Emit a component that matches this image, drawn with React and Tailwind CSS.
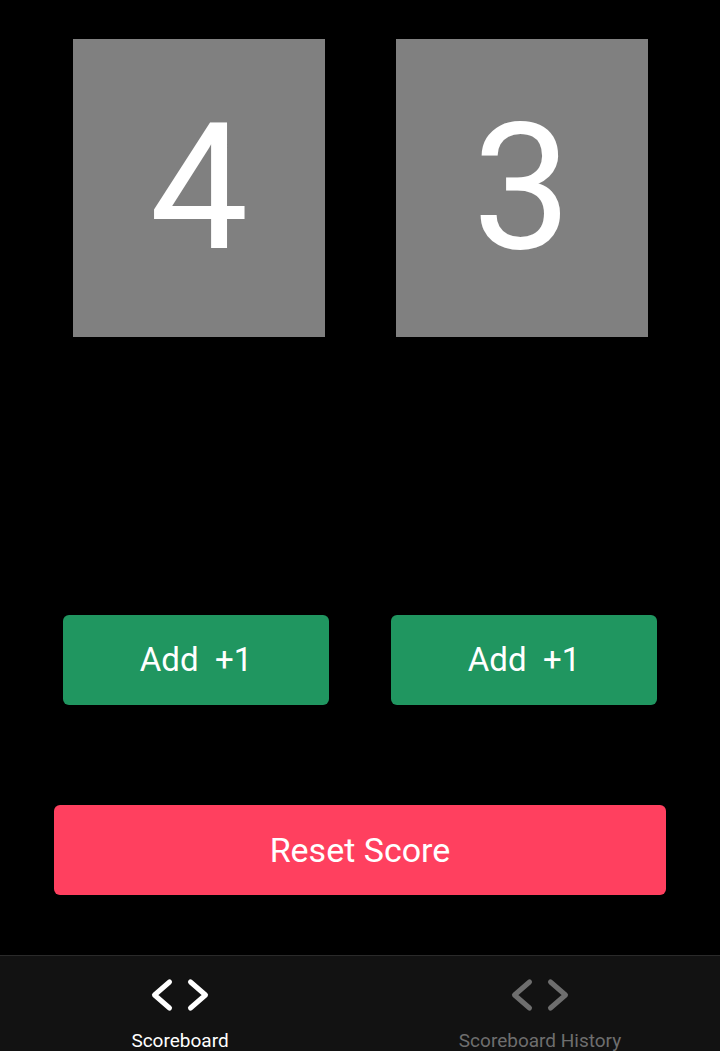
import React, { useState } from "react";

function CodeIcon({ className }) {
  return (
    <svg
      viewBox="0 0 60 34"
      width="60"
      height="34"
      fill="none"
      stroke="currentColor"
      strokeWidth="5"
      strokeLinecap="round"
      strokeLinejoin="round"
      className={className}
    >
      <path d="M19.5 4 L4.5 17 L19.5 30" />
      <path d="M40.5 4 L55.5 17 L40.5 30" />
    </svg>
  );
}

function App() {
  const [scoreA, setScoreA] = useState(4);
  const [scoreB, setScoreB] = useState(3);
  const [tab, setTab] = useState("scoreboard");

  return (
    <div
      className="h-[1051px] overflow-hidden bg-black flex flex-col"
      style={{ fontFamily: "Roboto, 'Liberation Sans', sans-serif" }}
    >
      <div className="flex justify-between pt-[39px] pl-[73px] pr-[72px]">
        <div className="w-[252px] h-[298px] bg-[#808080] flex items-center justify-center text-white text-[176px] leading-none">
          {scoreA}
        </div>
        <div className="w-[252px] h-[298px] bg-[#808080] flex items-center justify-center text-white text-[176px] leading-none">
          {scoreB}
        </div>
      </div>

      <div className="flex justify-between mt-[278px] pl-[63px] pr-[63px]">
        <button
          onClick={() => setScoreA(scoreA + 1)}
          className="w-[266px] h-[90px] rounded-[6px] bg-[#209660] text-white text-[33px]"
        >
          Add&nbsp;&nbsp;+1
        </button>
        <button
          onClick={() => setScoreB(scoreB + 1)}
          className="w-[266px] h-[90px] rounded-[6px] bg-[#209660] text-white text-[33px]"
        >
          Add&nbsp;&nbsp;+1
        </button>
      </div>

      <div className="mt-[100px] px-[54px]">
        <button
          onClick={() => {
            setScoreA(0);
            setScoreB(0);
          }}
          className="w-full h-[90px] rounded-[6px] bg-[#ff405f] text-white text-[34px]"
        >
          Reset Score
        </button>
      </div>

      <div className="mt-[60px] border-t border-[#2a2a2a] bg-[#121212] flex h-[120px] shrink-0">
        <button
          onClick={() => setTab("scoreboard")}
          className={
            "flex-1 flex flex-col items-center pt-[22px] " +
            (tab === "scoreboard" ? "text-white" : "text-[#6e6e6e]")
          }
        >
          <CodeIcon />
          <span className="text-[19px] leading-none mt-[19px]">Scoreboard</span>
        </button>
        <button
          onClick={() => setTab("history")}
          className={
            "flex-1 flex flex-col items-center pt-[22px] " +
            (tab === "history" ? "text-white" : "text-[#6e6e6e]")
          }
        >
          <CodeIcon />
          <span className="text-[19px] leading-none mt-[19px]">Scoreboard History</span>
        </button>
      </div>
    </div>
  );
}

export default App;
